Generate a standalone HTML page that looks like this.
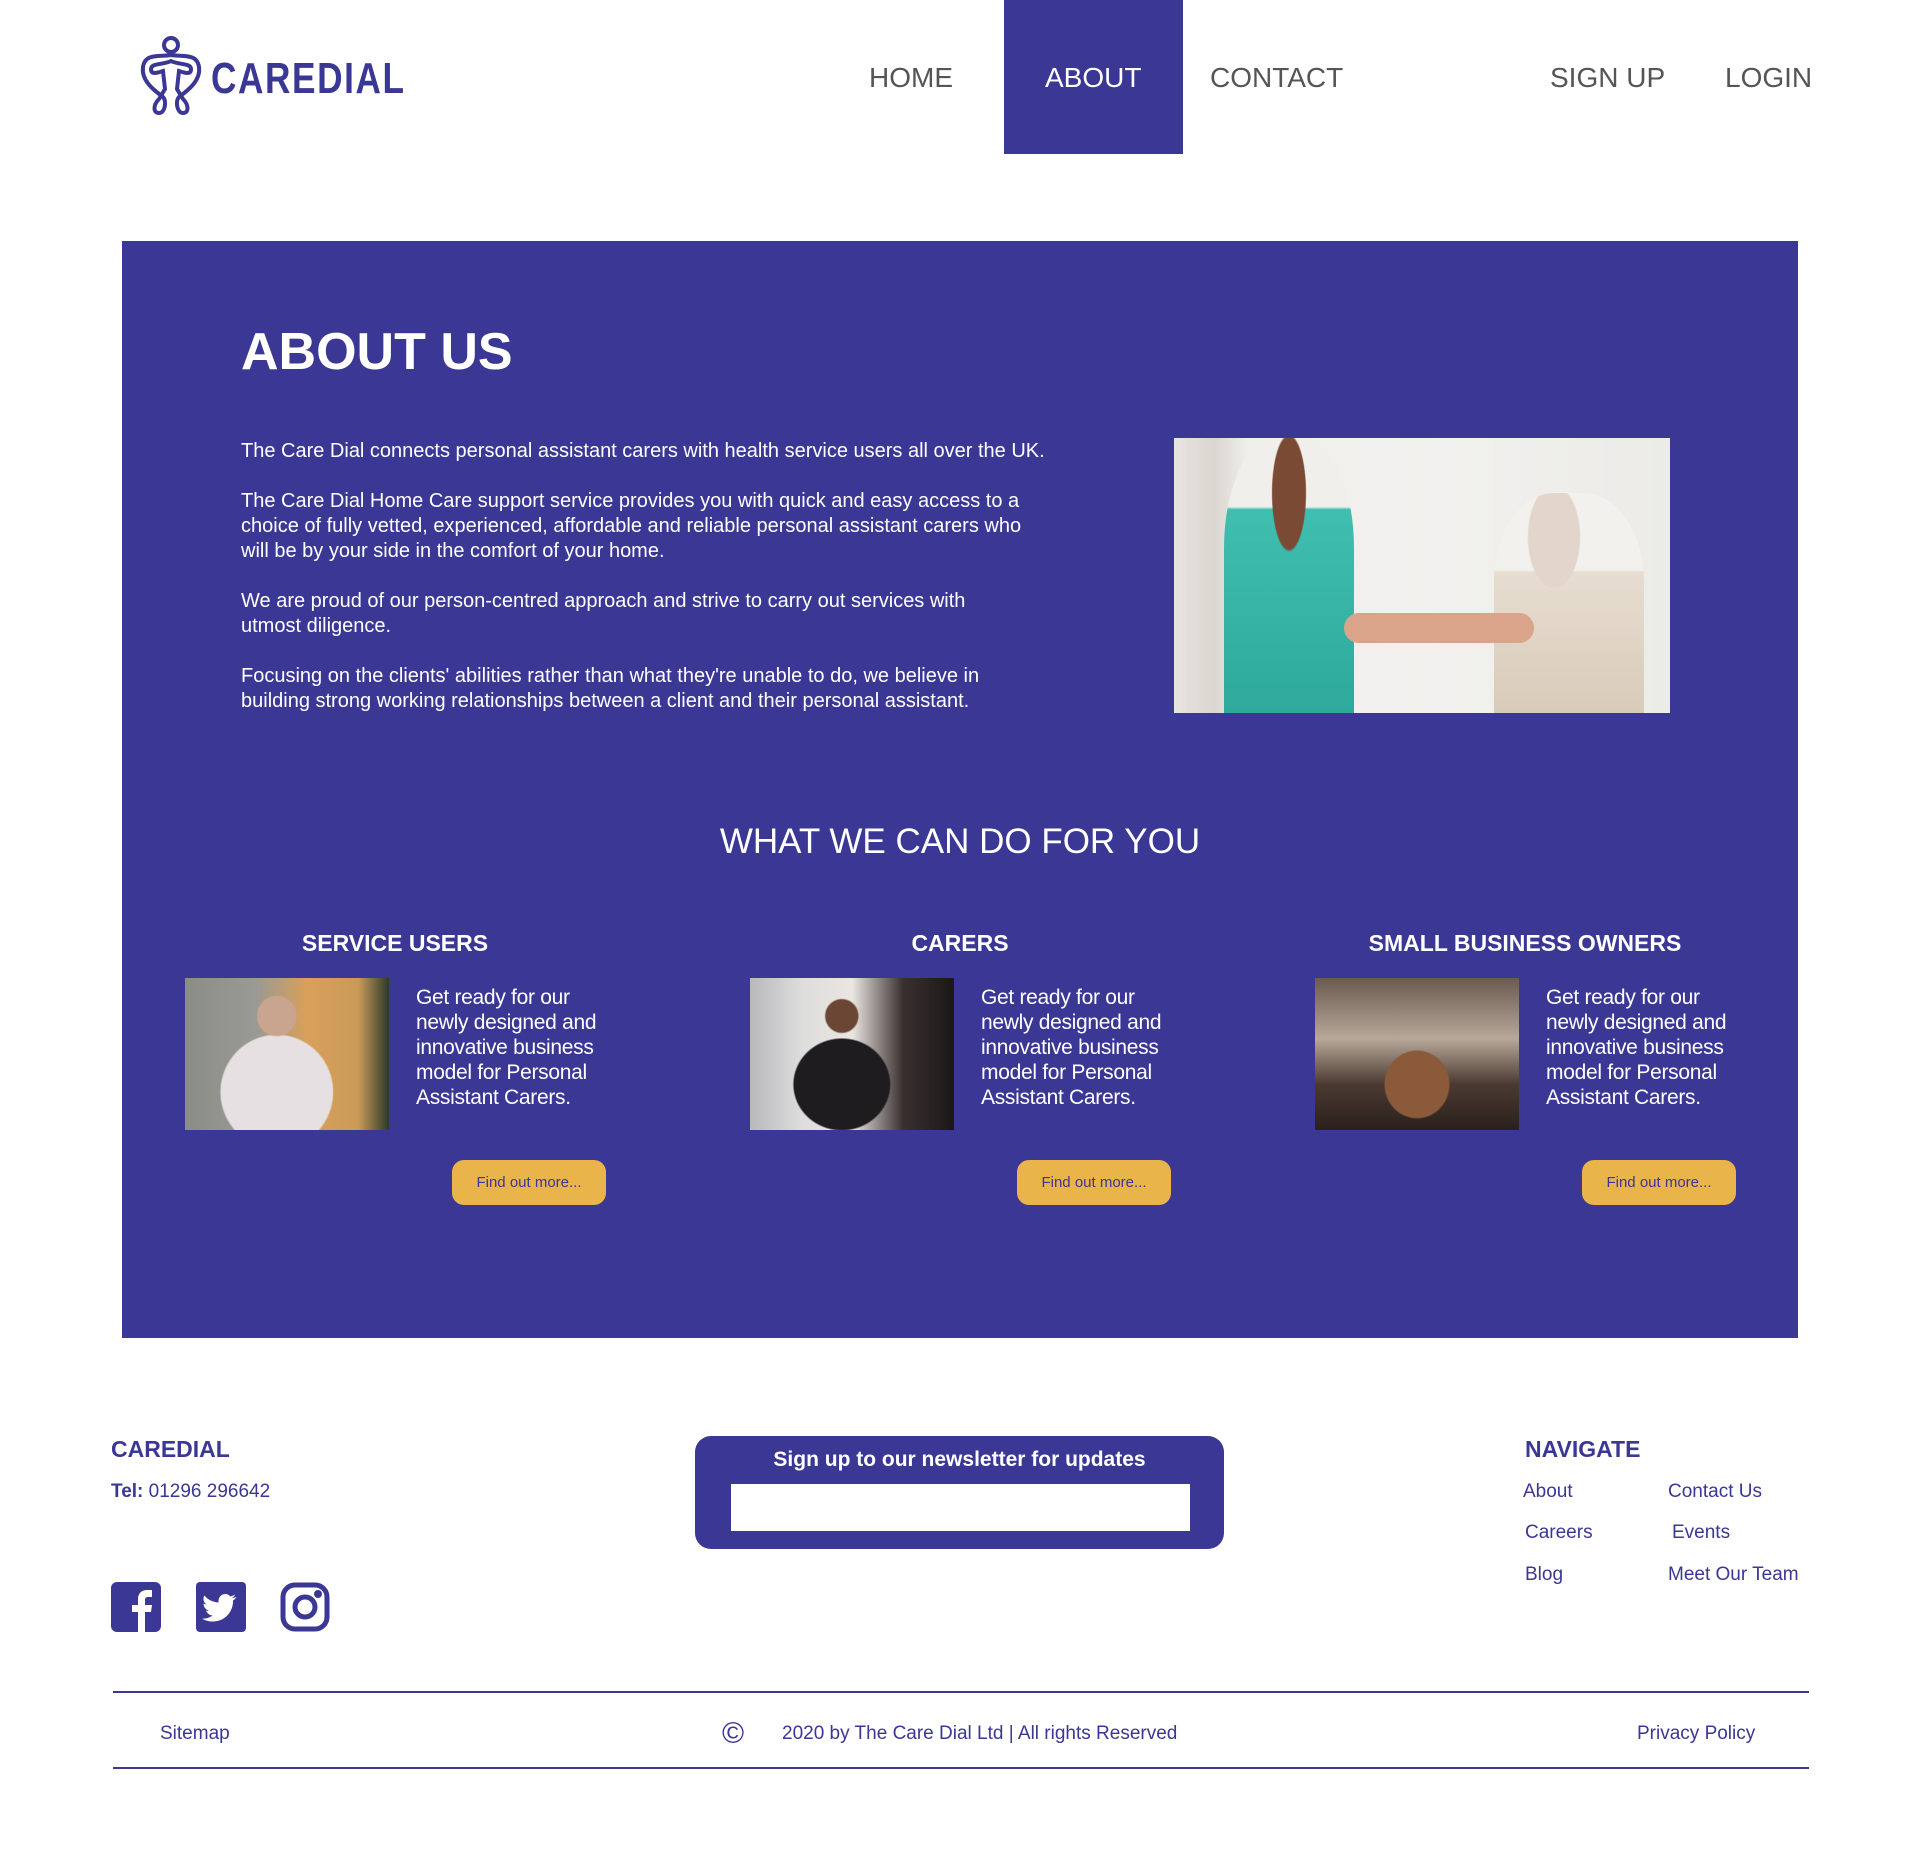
<!DOCTYPE html>
<html><head><meta charset="utf-8"><style>
*{margin:0;padding:0;box-sizing:border-box}
body{width:1920px;height:1849px;background:#fff;font-family:"Liberation Sans",sans-serif;position:relative;overflow:hidden;color:#3b3794}
.a{position:absolute}
.nav{position:absolute;top:62px;font-size:28px;color:#555;white-space:nowrap}
.panel{left:122px;top:241px;width:1676px;height:1097px;background:#3b3794}
.p{color:#fff;font-size:20px;line-height:25px;letter-spacing:0;left:241px;width:900px}
.ch{color:#fff;font-size:23px;font-weight:bold;top:930px;width:500px;text-align:center}
.ct{color:#fff;font-size:21px;line-height:25px;top:985px;width:200px;letter-spacing:-0.3px}
.btn{top:1160px;width:154px;height:45px;border-radius:12px;background:#e9b54a;color:#3b3794;font-size:15px;text-align:center;line-height:45px}
.fl{font-size:19px;color:#3b3794;font-weight:300}
</style></head><body>
<svg class="a" style="left:139px;top:35px" width="64" height="82" viewBox="0 0 64 82" fill="none" stroke="#3b3794" stroke-width="4">
<circle cx="32" cy="10" r="7"/>
<path d="M32 20 C20 22 6 18 4 32 C2 46 16 56 24 62 C28 66 26 78 20 78 C14 78 14 70 20 64 L26 54 L24 36 C18 38 12 40 12 34 C12 28 24 30 32 26 C40 30 52 28 52 34 C52 40 46 38 40 36 L38 54 L44 64 C50 70 50 78 44 78 C38 78 36 66 40 62 C48 56 62 46 60 32 C58 18 44 22 32 20Z"/>
</svg>
<div class="a" style="left:211px;top:54px;font-size:44px;letter-spacing:2px;color:#3b3794;font-weight:bold;line-height:50px;transform:scaleX(0.8);transform-origin:0 0">CAREDIAL</div>
<div class="a" style="left:1004px;top:0;width:179px;height:154px;background:#3b3794"></div>
<div class="nav" style="left:869px">HOME</div>
<div class="nav" style="left:1045px;color:#fff">ABOUT</div>
<div class="nav" style="left:1210px">CONTACT</div>
<div class="nav" style="left:1550px">SIGN UP</div>
<div class="nav" style="left:1725px">LOGIN</div>

<div class="a panel"></div>
<div class="a" style="left:241px;top:322px;font-size:52px;font-weight:bold;color:#fff">ABOUT US</div>
<div class="a p" style="top:439px">The Care Dial connects personal assistant carers with health service users all over the UK.</div>
<div class="a p" style="top:489px">The Care Dial Home Care support service provides you with quick and easy access to a<br>choice of fully vetted, experienced, affordable and reliable personal assistant carers who<br>will be by your side in the comfort of your home.</div>
<div class="a p" style="top:589px">We are proud of our person-centred approach and strive to carry out services with<br>utmost diligence.</div>
<div class="a p" style="top:664px">Focusing on the clients' abilities rather than what they're unable to do, we believe in<br>building strong working relationships between a client and their personal assistant.</div>
<div class="a" style="left:1174px;top:438px;width:496px;height:275px;background:linear-gradient(90deg,#e8e6e2 0%,#d9d6d0 8%,#f0efec 15%,#f2f1ee 50%,#ecebe8 100%)">
<div class="a" style="left:50px;top:0;width:130px;height:275px;background:radial-gradient(ellipse at 50% 20%,#7a4a34 0 18%,transparent 19%),linear-gradient(#f0efec 25%,#3fbfb0 26%,#2ea99c 100%);border-radius:40% 40% 0 0"></div>
<div class="a" style="left:320px;top:55px;width:150px;height:220px;background:radial-gradient(ellipse at 40% 20%,#e2d6cc 0 20%,transparent 21%),linear-gradient(#f2f1ee 35%,#e7ddd0 36%,#d8cbb9 100%);border-radius:40% 40% 0 0"></div>
<div class="a" style="left:170px;top:175px;width:190px;height:30px;background:#d9a48a;border-radius:15px"></div>
</div>

<div class="a" style="left:0;width:1920px;top:822px;text-align:center;color:#fff;font-size:35px;font-weight:300">WHAT WE CAN DO FOR YOU</div>

<div class="a ch" style="left:145px">SERVICE USERS</div>
<div class="a ch" style="left:710px">CARERS</div>
<div class="a ch" style="left:1275px">SMALL BUSINESS OWNERS</div>

<div class="a" style="left:185px;top:978px;width:204px;height:152px;background:radial-gradient(ellipse at 45% 25%,#c9a48e 0 12%,transparent 13%),radial-gradient(ellipse at 45% 75%,#e6e0e2 0 35%,transparent 36%),linear-gradient(90deg,#8a8d86 0%,#9a9a94 35%,#d9a05a 60%,#c99a58 85%,#2b3a2a 100%)"></div>
<div class="a" style="left:750px;top:978px;width:204px;height:152px;background:radial-gradient(ellipse at 45% 25%,#6b4634 0 10%,transparent 11%),radial-gradient(ellipse at 45% 70%,#1e1c1f 0 30%,transparent 31%),linear-gradient(90deg,#b8b8bc 0%,#ddd 25%,#eae6e0 50%,#3a3030 75%,#1b1717 100%)"></div>
<div class="a" style="left:1315px;top:978px;width:204px;height:152px;background:radial-gradient(ellipse at 50% 70%,#8a5a3a 0 22%,transparent 23%),linear-gradient(#6a5a50 0%,#b8a89a 40%,#4a3a30 70%,#2a201c 100%)"></div>

<div class="a ct" style="left:416px">Get ready for our newly designed and innovative business model for Personal Assistant Carers.</div>
<div class="a ct" style="left:981px">Get ready for our newly designed and innovative business model for Personal Assistant Carers.</div>
<div class="a ct" style="left:1546px">Get ready for our newly designed and innovative business model for Personal Assistant Carers.</div>

<div class="a btn" style="left:452px">Find out more...</div>
<div class="a btn" style="left:1017px">Find out more...</div>
<div class="a btn" style="left:1582px">Find out more...</div>

<div class="a" style="left:111px;top:1436px;font-size:23px;font-weight:bold">CAREDIAL</div>
<div class="a" style="left:111px;top:1481px;font-size:19px"><b>Tel:</b> 01296 296642</div>
<svg class="a" style="left:111px;top:1582px" width="50" height="50" viewBox="0 0 50 50"><rect width="50" height="50" rx="6" fill="#3b3794"/><path d="M27 50V30h-6v-7h6v-6c0-6 4-9 9-9h5v7h-4c-2 0-3 1-3 3v5h7l-1 7h-6v20z" fill="#fff"/></svg>
<svg class="a" style="left:196px;top:1582px" width="50" height="50" viewBox="0 0 50 50"><rect width="50" height="50" rx="4" fill="#3b3794"/><path d="M40 15c-1 .5-2.5 1-4 1 1.5-1 2.5-2 3-3.5-1.5 1-3 1.5-4.5 2-1.5-1.5-3-2.5-5-2.5-4 0-7 3-7 7v1.5c-6-.5-11-3-14-7-2 3-1 7 2 9-1 0-2-.5-3-1 0 3.5 2.5 6.5 5.5 7-1 .5-2 .5-3 0 1 3 4 5 6.5 5-3 2-6.5 3.5-10.5 3 3 2 7 3 11 3 13 0 20-11 20-20v-1c1.5-1 2.5-2 3.5-3.5z" fill="#fff"/></svg>
<svg class="a" style="left:280px;top:1582px" width="50" height="50" viewBox="0 0 50 50" fill="none" stroke="#3b3794" stroke-width="5"><rect x="3" y="3" width="44" height="44" rx="12"/><circle cx="25" cy="25" r="10"/><circle cx="38" cy="12" r="1.5" fill="#3b3794"/></svg>

<div class="a" style="left:695px;top:1436px;width:529px;height:113px;background:#3b3794;border-radius:16px"></div>
<div class="a" style="left:695px;top:1448px;width:529px;text-align:center;color:#fff;font-weight:bold;font-size:21px">Sign up to our newsletter for updates</div>
<div class="a" style="left:731px;top:1484px;width:459px;height:47px;background:#fff"></div>

<div class="a" style="left:1525px;top:1436px;font-size:23px;font-weight:bold">NAVIGATE</div>
<div class="a fl" style="left:1523px;top:1481px">About</div>
<div class="a fl" style="left:1668px;top:1481px">Contact Us</div>
<div class="a fl" style="left:1525px;top:1522px">Careers</div>
<div class="a fl" style="left:1672px;top:1522px">Events</div>
<div class="a fl" style="left:1525px;top:1564px">Blog</div>
<div class="a fl" style="left:1668px;top:1564px">Meet Our Team</div>

<div class="a" style="left:113px;top:1691px;width:1696px;height:2px;background:#3b3794"></div>
<div class="a" style="left:113px;top:1767px;width:1696px;height:2px;background:#3b3794"></div>
<div class="a fl" style="left:160px;top:1723px">Sitemap</div>
<div class="a" style="left:722px;top:1717px;font-size:30px;color:#3b3794">©</div>
<div class="a fl" style="left:782px;top:1723px">2020 by The Care Dial Ltd | All rights Reserved</div>
<div class="a fl" style="left:1637px;top:1723px">Privacy Policy</div>
</body></html>
